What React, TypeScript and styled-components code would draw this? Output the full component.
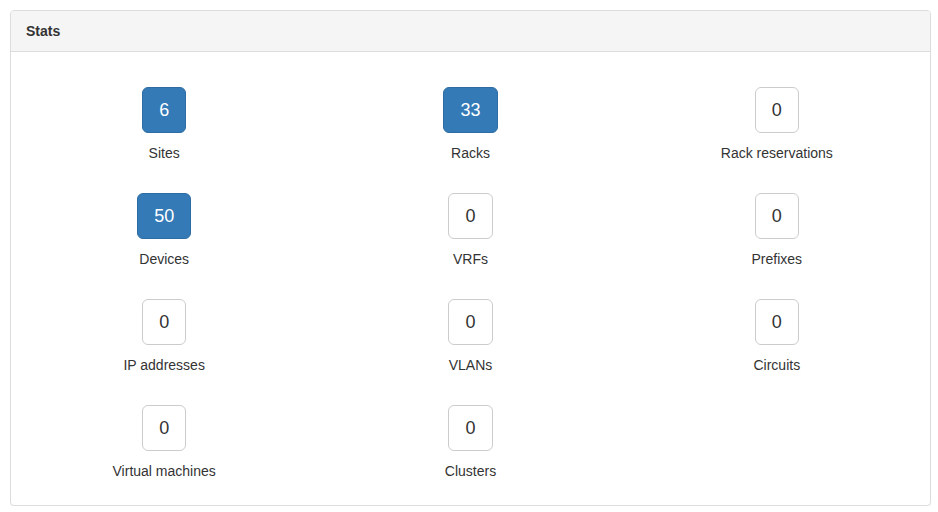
import React from "react";
import styled, { createGlobalStyle } from "styled-components";

const Global = createGlobalStyle`
  html, body { margin: 0; padding: 0; background: #fff; }
  body {
    font-family: "Liberation Sans", Arial, Helvetica, sans-serif;
    font-size: 14px;
    line-height: 1.42857143;
    color: #333;
  }
  * { box-sizing: border-box; }
`;

const Page = styled.div`
  padding: 10px 0 0 10px;
`;

const Panel = styled.div`
  width: 921px;
  height: 496px;
  border: 1px solid #ddd;
  border-radius: 4px;
  background: #fff;
  box-shadow: 0 1px 1px rgba(0, 0, 0, 0.05);
  overflow: hidden;
`;

const Heading = styled.div`
  padding: 10px 15px;
  background: #f5f5f5;
  border-bottom: 1px solid #ddd;
  font-weight: bold;
  font-size: 14px;
  line-height: 20px;
  color: #333;
`;

const Body = styled.div`
  padding: 15px 0;
`;

const Grid = styled.div`
  display: grid;
  grid-template-columns: repeat(3, 1fr);
`;

const Cell = styled.div`
  padding: 20px 15px 0;
  text-align: center;
  display: flex;
  flex-direction: column;
  align-items: center;
`;

const CountButton = styled.a<{ $primary: boolean }>`
  display: inline-block;
  padding: 10px 16px;
  font-size: 18px;
  line-height: 24px;
  height: 46px;
  border-radius: 6px;
  border: 1px solid ${(p) => (p.$primary ? "#2e6da4" : "#ccc")};
  background: ${(p) => (p.$primary ? "#337ab7" : "#fff")};
  color: ${(p) => (p.$primary ? "#fff" : "#333")};
  text-decoration: none;
  cursor: pointer;
`;

const Label = styled.p`
  margin: 10px 0;
  line-height: 20px;
  font-size: 14px;
  color: #333;
`;

const stats: { n: number; label: string }[] = [
  { n: 6, label: "Sites" },
  { n: 33, label: "Racks" },
  { n: 0, label: "Rack reservations" },
  { n: 50, label: "Devices" },
  { n: 0, label: "VRFs" },
  { n: 0, label: "Prefixes" },
  { n: 0, label: "IP addresses" },
  { n: 0, label: "VLANs" },
  { n: 0, label: "Circuits" },
  { n: 0, label: "Virtual machines" },
  { n: 0, label: "Clusters" },
];

export default function App() {
  return (
    <>
      <Global />
      <Page>
        <Panel>
          <Heading>Stats</Heading>
          <Body>
            <Grid>
              {stats.map((s) => (
                <Cell key={s.label}>
                  <CountButton $primary={s.n > 0}>{s.n}</CountButton>
                  <Label>{s.label}</Label>
                </Cell>
              ))}
            </Grid>
          </Body>
        </Panel>
      </Page>
    </>
  );
}
